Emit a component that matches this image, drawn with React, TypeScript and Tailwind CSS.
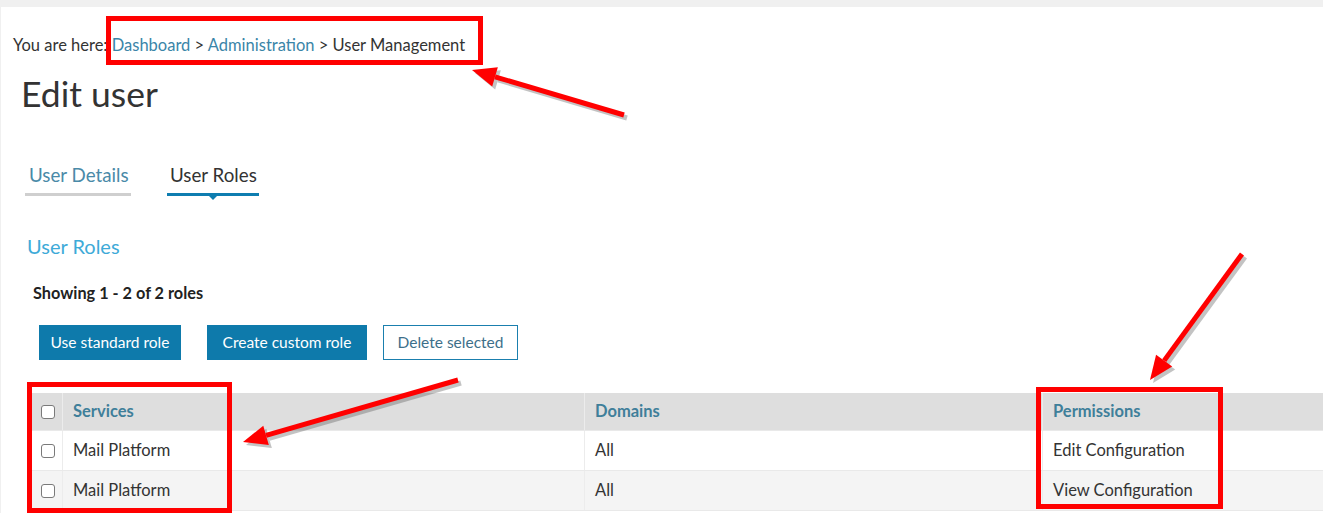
import React from "react";

function Box({ className }: { className: string }) {
  return <div className={`absolute border-[5px] border-[#ff0000] pointer-events-none ${className}`} />;
}

function Arrow({ x1, y1, x2, y2 }: { x1: number; y1: number; x2: number; y2: number }) {
  const dx = x2 - x1;
  const dy = y2 - y1;
  const len = Math.hypot(dx, dy);
  const ux = dx / len;
  const uy = dy / len;
  const head = 24;
  const w = 10;
  const bx = x2 - ux * head;
  const by = y2 - uy * head;
  const p1 = `${bx - uy * w},${by + ux * w}`;
  const p2 = `${bx + uy * w},${by - ux * w}`;
  return (
    <g>
      <g transform="translate(3,3)" opacity="0.35">
        <line x1={x1} y1={y1} x2={bx} y2={by} stroke="#555" strokeWidth="5" />
        <polygon points={`${x2},${y2} ${p1} ${p2}`} fill="#555" />
      </g>
      <line x1={x1} y1={y1} x2={bx} y2={by} stroke="#ff0000" strokeWidth="5" />
      <polygon points={`${x2},${y2} ${p1} ${p2}`} fill="#ff0000" />
    </g>
  );
}

function Check() {
  return <span className="block w-[14px] h-[14px] rounded-[3px] border border-[#7a7a7a] bg-white" />;
}

export default function App() {
  const rows = [
    ["Mail Platform", "All", "Edit Configuration"],
    ["Mail Platform", "All", "View Configuration"],
  ];
  return (
    <div
      className="relative w-[1323px] h-[513px] overflow-hidden bg-[#f0f0f0] text-[#333]"
      style={{ fontFamily: "Lato, 'Open Sans', sans-serif" }}
    >
      <div className="mt-[7px] ml-[1px] h-[506px] bg-white flex flex-col">
        <div className="pl-[12px] pt-[27px] text-[16.5px] leading-[22px] text-[#333] whitespace-nowrap">
          You are here: <span className="text-[#3a85a8]">Dashboard</span> &gt;{" "}
          <span className="text-[#3a85a8]">Administration</span> &gt; User Management
        </div>
        <h1 className="pl-[20px] mt-[16px] text-[35.5px] leading-[44px] text-[#333] font-normal">Edit user</h1>

        <div className="flex pl-[24px] mt-[47px] gap-[36px] text-[18.75px] leading-[24px] whitespace-nowrap">
          <div className="relative pb-[6px] pl-[4px] w-[106px] border-b-[3px] border-[#cfcfcf] text-[#4a8aa8]">User Details</div>
          <div className="relative pb-[6px] pl-[3px] w-[92px] border-b-[3px] border-[#0e7db0] text-[#333]">
            User Roles
            <span className="absolute left-1/2 -translate-x-1/2 top-full w-0 h-0 border-l-[7px] border-r-[7px] border-t-[7px] border-l-transparent border-r-transparent border-t-[#0e7db0]" />
          </div>
        </div>

        <div className="pl-[26px] mt-[37px] text-[20px] leading-[26px] text-[#3eaad8]">User Roles</div>
        <div className="pl-[32px] mt-[24px] text-[16.3px] leading-[20px] font-bold text-[#222]">Showing 1 - 2 of 2 roles</div>

        <div className="flex pl-[38px] mt-[22px] gap-[16px] text-[15.5px] whitespace-nowrap">
          <button className="h-[35px] w-[142px] bg-[#0e7aab] text-white mr-[10px]">Use standard role</button>
          <button className="h-[35px] w-[160px] bg-[#0e7aab] text-white">Create custom role</button>
          <button className="h-[35px] w-[135px] border border-[#1a7fae] text-[#3d6f8a] bg-white">Delete selected</button>
        </div>

        <div className="ml-[29px] mt-[33px] text-[16.5px] whitespace-nowrap">
          <div className="grid grid-cols-[33px_522px_458px_1fr] h-[38px] bg-[#dedede] border-b border-[#e9e9e9] font-bold text-[#3f7f9a]">
            <div className="flex items-center pl-[11px] border-r border-[#ececec]"><Check /></div>
            <div className="flex items-center pl-[10px] border-r border-[#ececec]">Services</div>
            <div className="flex items-center pl-[10px] border-r border-[#ececec]">Domains</div>
            <div className="flex items-center pl-[10px]">Permissions</div>
          </div>
          {rows.map((r, i) => (
            <div
              key={i}
              className={`grid grid-cols-[33px_522px_458px_1fr] h-[40px] border-b border-[#e9e9e9] text-[#333] ${i % 2 ? "bg-[#f4f4f4]" : "bg-white"}`}
            >
              <div className="flex items-center pl-[11px] border-r border-[#ececec]"><Check /></div>
              <div className="flex items-center pl-[10px] border-r border-[#ececec]">{r[0]}</div>
              <div className="flex items-center pl-[10px] border-r border-[#ececec]">{r[1]}</div>
              <div className="flex items-center pl-[10px]">{r[2]}</div>
            </div>
          ))}
        </div>
      </div>

      <Box className="left-[106px] top-[16px] w-[377px] h-[49px]" />
      <Box className="left-[27px] top-[382px] w-[205px] h-[131px]" />
      <Box className="left-[1036px] top-[387px] w-[187px] h-[122px]" />
      <svg className="absolute left-0 top-0 pointer-events-none" width="1323" height="513">
        <Arrow x1={624} y1={115} x2={472} y2={70} />
        <Arrow x1={458} y1={380} x2={243} y2={442} />
        <Arrow x1={1242} y1={254} x2={1150} y2={380} />
      </svg>
    </div>
  );
}
